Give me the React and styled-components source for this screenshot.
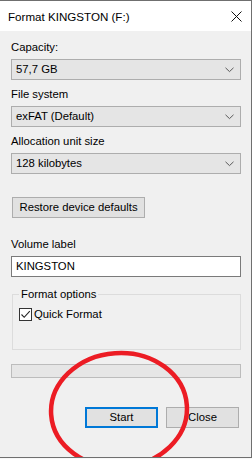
import React from "react";
import styled, { createGlobalStyle } from "styled-components";

const Global = createGlobalStyle`
  html, body { margin: 0; padding: 0; background: #f7f7f7; }
  body { font-family: "Liberation Sans", Arial, sans-serif; font-size: 11.3px; color: #000; }
  * { box-sizing: border-box; }
`;

const Window = styled.div`
  position: relative;
  width: 252px;
  height: 458px;
  border-top: 1px solid #6f6f6f;
  border-right: 1px solid #6f6f6f;
  border-bottom: 1px solid #6f6f6f;
  background: #f0f0f0;
  display: flex;
  flex-direction: column;
  overflow: hidden;
`;

const TitleBar = styled.div`
  height: 30px;
  background: #ffffff;
  display: flex;
  align-items: center;
  justify-content: space-between;
  padding: 0 9px 0 8px;
  font-size: 11.6px;
  line-height: 15px;
`;

const Title = styled.span`
  color: #000;
`;

const Body = styled.div`
  flex: 1;
  display: flex;
  flex-direction: column;
  padding: 9px 10px 0 11px;
`;

const Label = styled.div`
  line-height: 15px;
  height: 15px;
  margin-top: ${(p) => p.$top || 0}px;
  margin-bottom: 4px;
  white-space: nowrap;
`;

const Combo = styled.div`
  height: 21px;
  background: #e5e5e5;
  border: 1px solid #adadad;
  display: flex;
  align-items: center;
  justify-content: space-between;
  padding: 0 6px 0 4px;
  line-height: 15px;
`;

const Chevron = () => (
  <svg width="9" height="6" viewBox="0 0 9 6">
    <path d="M0.5 0.8 L4.5 4.6 L8.5 0.8" fill="none" stroke="#5a5a5a" strokeWidth="1" />
  </svg>
);

const Button = styled.div`
  height: 21px;
  width: ${(p) => p.$w}px;
  background: #e1e1e1;
  border: ${(p) => (p.$focus ? "2px solid #0078d7" : "1px solid #adadad")};
  display: flex;
  align-items: center;
  justify-content: center;
  line-height: 15px;
  white-space: nowrap;
`;

const RestoreRow = styled.div`
  display: flex;
  margin-top: 23px;
  padding-left: 1px;
`;

const TextInput = styled.div`
  height: 21px;
  background: #ffffff;
  border: 1px solid #7a7a7a;
  display: flex;
  align-items: center;
  padding: 0 4px;
  line-height: 15px;
`;

const Group = styled.fieldset`
  margin: 10px 0 0 1px;
  padding: 0 0 0 6px;
  width: 229px;
  height: 63px;
  border: 1px solid #dcdcdc;
  min-width: 0;
`;

const Legend = styled.legend`
  padding: 0 2px;
  margin-left: 0;
  line-height: 15px;
`;

const CheckRow = styled.div`
  display: flex;
  align-items: center;
  gap: 2px;
  margin-top: 5px;
  line-height: 15px;
`;

const Box = styled.div`
  width: 13px;
  height: 13px;
  border: 1px solid #333333;
  background: #ffffff;
  display: flex;
  align-items: center;
  justify-content: center;
`;

const Progress = styled.div`
  height: 14px;
  margin-top: 14px;
  background: #e6e6e6;
  border: 1px solid #bcbcbc;
`;

const ButtonRow = styled.div`
  display: flex;
  justify-content: flex-end;
  gap: 8px;
  margin-top: 29px;
  padding-right: 2px;
`;

const Annotation = styled.svg`
  position: absolute;
  left: 0;
  top: 0;
  pointer-events: none;
`;

export default function App() {
  return (
    <>
      <Global />
      <Window>
        <TitleBar>
          <Title>Format KINGSTON (F:)</Title>
          <svg width="11" height="11" viewBox="0 0 11 11">
            <path d="M0.5 0.5 L10.5 10.5 M10.5 0.5 L0.5 10.5" stroke="#111" strokeWidth="1" />
          </svg>
        </TitleBar>
        <Body>
          <Label>Capacity:</Label>
          <Combo>
            <span>57,7 GB</span>
            <Chevron />
          </Combo>
          <Label $top={7}>File system</Label>
          <Combo>
            <span>exFAT (Default)</span>
            <Chevron />
          </Combo>
          <Label $top={7}>Allocation unit size</Label>
          <Combo>
            <span>128 kilobytes</span>
            <Chevron />
          </Combo>
          <RestoreRow>
            <Button $w={133}>Restore device defaults</Button>
          </RestoreRow>
          <Label $top={19}>Volume label</Label>
          <TextInput>KINGSTON</TextInput>
          <Group>
            <Legend>Format options</Legend>
            <CheckRow>
              <Box>
                <svg width="11" height="11" viewBox="0 0 11 11">
                  <path d="M1.5 5.5 L4.2 8.3 L9.8 2.2" fill="none" stroke="#222" strokeWidth="1.1" />
                </svg>
              </Box>
              <span>Quick Format</span>
            </CheckRow>
          </Group>
          <Progress />
          <ButtonRow>
            <Button $w={73} $focus>Start</Button>
            <Button $w={73}>Close</Button>
          </ButtonRow>
        </Body>
        <Annotation width="252" height="459" viewBox="0 0 252 459">
          <ellipse cx="119" cy="409" rx="68" ry="57" fill="none" stroke="#ec1c24" strokeWidth="4.5" transform="rotate(-4 119 409)" />
        </Annotation>
      </Window>
    </>
  );
}
